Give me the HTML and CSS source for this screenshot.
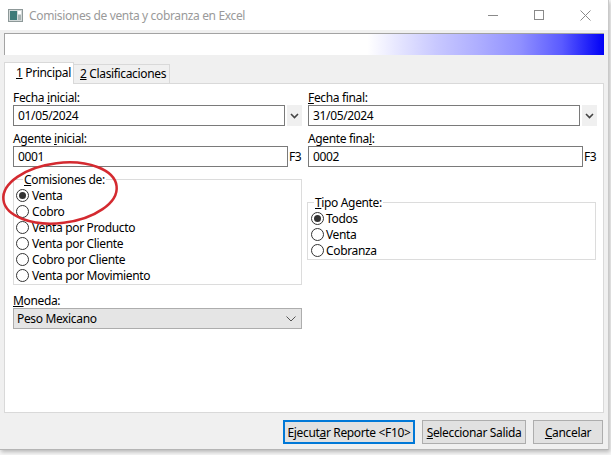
FILE: index.html
```html
<!DOCTYPE html>
<html lang="es">
<head>
<meta charset="utf-8">
<title>Comisiones de venta y cobranza en Excel</title>
<link rel="stylesheet" href="styles.css">
</head>
<body>
<div class="window">
  <div class="titlebar">
    <svg class="app-icon" width="15" height="13" viewBox="0 0 15 13">
      <rect x="0.5" y="0.5" width="14" height="12" fill="#d4dada" stroke="#8d9898"/>
      <rect x="2" y="2" width="7" height="9" fill="#3f7a78"/>
      <rect x="10" y="2" width="3" height="3" fill="#ffffff"/>
      <rect x="10" y="6" width="3" height="5" fill="#a9b4b4"/>
    </svg>
    <span class="title">Comisiones de venta y cobranza en Excel</span>
    <div class="controls">
      <div class="ctrl"><svg width="10" height="10" viewBox="0 0 10 10"><line x1="0" y1="5.5" x2="10" y2="5.5" stroke="#8a8a8a" stroke-width="1"/></svg></div>
      <div class="ctrl"><svg width="10" height="10" viewBox="0 0 10 10"><rect x="0.5" y="0.5" width="9" height="9" fill="none" stroke="#8a8a8a" stroke-width="1"/></svg></div>
      <div class="ctrl"><svg width="11" height="11" viewBox="0 0 11 11"><path d="M0.5 0.5 L10.5 10.5 M10.5 0.5 L0.5 10.5" stroke="#8a8a8a" stroke-width="1" fill="none"/></svg></div>
    </div>
  </div>

  <div class="progress"></div>

  <div class="tabs">
    <div class="tab tab-active"><u>1</u> Principal</div>
    <div class="tab tab-second"><u>2</u> Clasificaciones</div>
  </div>

  <div class="panel">
    <div class="form-grid">
      <div class="field">
        <div class="lbl">Fecha <u>i</u>nicial:</div>
        <div class="input-row">
          <div class="input">01/05/2024</div>
          <div class="drop-btn"><svg width="9" height="6" viewBox="0 0 9 6"><path d="M1 1 L4.5 4.5 L8 1" fill="none" stroke="#444" stroke-width="1.6"/></svg></div>
        </div>
      </div>
      <div class="field">
        <div class="lbl"><u>F</u>echa final:</div>
        <div class="input-row">
          <div class="input">31/05/2024</div>
          <div class="drop-btn"><svg width="9" height="6" viewBox="0 0 9 6"><path d="M1 1 L4.5 4.5 L8 1" fill="none" stroke="#444" stroke-width="1.6"/></svg></div>
        </div>
      </div>

      <div class="field field-gap">
        <div class="lbl">Agente <u>i</u>nicial:</div>
        <div class="input-row">
          <div class="input">0001</div>
          <div class="key">F3</div>
        </div>
      </div>
      <div class="field field-gap">
        <div class="lbl">Agente fina<u>l</u>:</div>
        <div class="input-row">
          <div class="input">0002</div>
          <div class="key">F3</div>
        </div>
      </div>

      <fieldset class="group group-comisiones">
        <legend class="legend"><u>C</u>omisiones de:</legend>
        <div class="radio"><span class="dot dot-on"></span>Venta</div>
        <div class="radio"><span class="dot"></span>Cobro</div>
        <div class="radio"><span class="dot"></span>Venta por Producto</div>
        <div class="radio"><span class="dot"></span>Venta por Cliente</div>
        <div class="radio"><span class="dot"></span>Cobro por Cliente</div>
        <div class="radio"><span class="dot"></span>Venta por Movimiento</div>
      </fieldset>

      <fieldset class="group group-tipo">
        <legend class="legend legend-tipo"><u>T</u>ipo Agente:</legend>
        <div class="radio radio-tight"><span class="dot dot-on"></span>Todos</div>
        <div class="radio radio-tight"><span class="dot"></span>Venta</div>
        <div class="radio radio-tight"><span class="dot"></span>Cobranza</div>
      </fieldset>

      <div class="field field-moneda">
        <div class="lbl"><u>M</u>oneda:</div>
        <div class="select">
          <span>Peso Mexicano</span>
          <svg width="10" height="6" viewBox="0 0 10 6"><path d="M0.5 0.5 L5 5 L9.5 0.5" fill="none" stroke="#555" stroke-width="1"/></svg>
        </div>
      </div>
    </div>
  </div>

  <div class="buttons">
    <div class="btn btn-default btn-run">Ejecut<u>a</u>r Reporte &lt;F10&gt;</div>
    <div class="btn btn-out"><u>S</u>eleccionar Salida</div>
    <div class="btn btn-cancel"><u>C</u>ancelar</div>
  </div>
</div>

<svg class="annotation" width="611" height="455" viewBox="0 0 611 455">
  <ellipse cx="60" cy="193" rx="57" ry="30" transform="rotate(-7 60 193)" fill="none" stroke="#d42a30" stroke-width="2.5"/>
</svg>
</body>
</html>
```

FILE: styles.css
```css
* { box-sizing: border-box; }

html, body {
  margin: 0;
  padding: 0;
}

body {
  width: 611px;
  height: 455px;
  overflow: hidden;
  position: relative;
  background: #f6f6f6;
  font-family: "Noto Sans", "Segoe UI", sans-serif;
  font-size: 12px;
  letter-spacing: -0.35px;
  color: #000;
}

u { text-decoration: underline; text-underline-offset: 1px; }

.window {
  width: 609px;
  height: 450px;
  background: #f0f0f0;
  border-right: 1px solid #c9c9c9;
  border-bottom: 1px solid #b5b5b5;
  box-shadow: 1px 2px 4px rgba(0, 0, 0, 0.25);
  display: flex;
  flex-direction: column;
}

/* Title bar */
.titlebar {
  height: 30px;
  flex: none;
  background: #fff;
  display: flex;
  align-items: center;
}

.app-icon {
  margin-left: 8px;
  margin-top: 1px;
  flex: none;
}

.title {
  margin-left: 6px;
  color: #9a9a9a;
  font-size: 12px;
}

.controls {
  margin-left: auto;
  display: flex;
  height: 30px;
}

.ctrl {
  width: 46px;
  height: 30px;
  display: flex;
  align-items: center;
  justify-content: center;
}

/* Progress bar */
.progress {
  flex: none;
  margin: 3px 4px 0 4px;
  height: 22px;
  border-top: 1px solid #a3a3a3;
  border-left: 1px solid #a3a3a3;
  background: linear-gradient(to right,
    #ffffff 0%, #ffffff 60.5%,
    #e4e4ff 66%, #c8c8ff 72%, #aeaeff 79%,
    #9090ff 86%, #5a5aff 93%, #0000f6 100%);
}

/* Tabs */
.tabs {
  flex: none;
  display: flex;
  align-items: flex-end;
  margin-top: 7px;
  padding-left: 4px;
  height: 22px;
}

.tab {
  height: 20px;
  line-height: 18px;
  border: 1px solid #d9d9d9;
  border-bottom: none;
  background: #f0f0f0;
  white-space: nowrap;
}

.tab-active {
  width: 70px;
  height: 22px;
  line-height: 20px;
  padding-left: 11px;
  background: #fff;
  position: relative;
  z-index: 1;
}

.tab-second {
  width: 96px;
  padding-left: 6px;
  border-left: none;
}

/* Panel */
.panel {
  flex: none;
  height: 330px;
  margin: -1px 4px 0 4px;
  background: #fff;
  border: 1px solid #d9d9d9;
  padding: 6px 0 0 8px;
}

.form-grid {
  display: grid;
  grid-template-columns: 289px 289px;
  column-gap: 6px;
  align-items: start;
}

.field { display: flex; flex-direction: column; }
.field-gap { margin-top: 5px; }

.lbl {
  height: 15px;
  line-height: 15px;
  white-space: nowrap;
}

.input-row {
  display: flex;
  align-items: stretch;
  height: 21px;
}

.input {
  flex: 1;
  border: 1px solid #7a7a7a;
  padding-left: 4px;
  line-height: 19px;
  background: #fff;
}

.drop-btn {
  width: 15px;
  margin-left: 2px;
  background: #f0f0f0;
  display: flex;
  align-items: center;
  justify-content: center;
}

.key {
  width: 13px;
  margin-left: 1px;
  line-height: 21px;
  font-size: 12px;
  letter-spacing: -0.5px;
}

/* Group boxes */
.group {
  margin: 5px 0 0 0;
  padding: 0 0 1px 2px;
  border: 1px solid #dcdcdc;
  min-width: 0;
}

.legend {
  padding: 0 1px;
  margin-left: 7px;
  line-height: 15px;
  height: 15px;
}

.group-tipo {
  margin-top: 28px;
  margin-left: -1px;
  margin-right: 1px;
  padding-left: 3px;
  padding-bottom: 1px;
}

.legend-tipo { margin-left: 3px; }

.radio {
  height: 16px;
  display: flex;
  align-items: center;
  white-space: nowrap;
}

.dot {
  width: 13px;
  height: 13px;
  border: 1px solid #333;
  border-radius: 50%;
  background: #fff;
  margin-right: 3px;
  flex: none;
  display: flex;
  align-items: center;
  justify-content: center;
}

.radio-tight .dot { margin-right: 2px; }

.dot-on::after {
  content: "";
  width: 7px;
  height: 7px;
  border-radius: 50%;
  background: #333;
}

/* Moneda */
.field-moneda { margin-top: 8px; }

.select {
  height: 21px;
  background: #e5e5e5;
  border: 1px solid #adadad;
  display: flex;
  align-items: center;
  justify-content: space-between;
  padding: 0 5px 0 3px;
}

/* Bottom buttons */
.buttons {
  flex: none;
  display: flex;
  justify-content: flex-end;
  gap: 7px;
  margin-top: 7px;
  padding-right: 5px;
}

.btn {
  height: 24px;
  background: #e1e1e1;
  border: 1px solid #adadad;
  display: flex;
  align-items: center;
  justify-content: center;
  white-space: nowrap;
}

.btn-default { border: 2px solid #0078d7; }
.btn-run { width: 132px; }
.btn-out { width: 104px; }
.btn-cancel { width: 70px; }

/* Annotation overlay */
.annotation {
  position: absolute;
  left: 0;
  top: 0;
  pointer-events: none;
}
```
